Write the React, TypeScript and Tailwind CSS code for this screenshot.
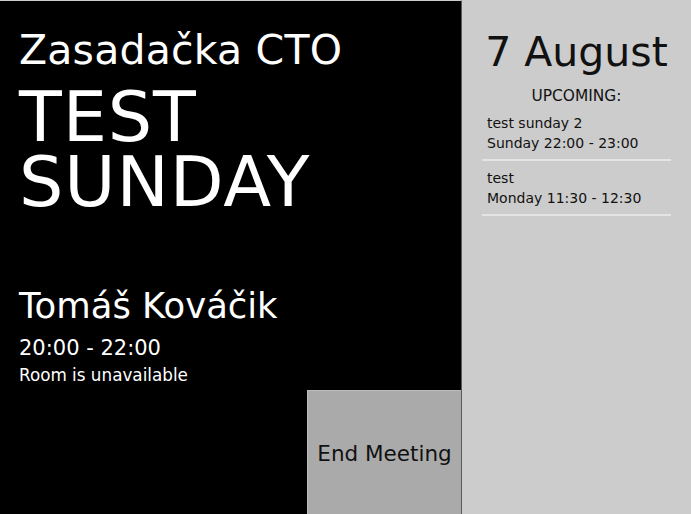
const upcoming = [
  { title: "test sunday 2", when: "Sunday 22:00 - 23:00" },
  { title: "test", when: "Monday 11:30 - 12:30" },
];

export default function App() {
  return (
    <div className="flex h-[514px] w-[691px] overflow-hidden bg-[#cccccc] font-['DejaVu_Sans',sans-serif]">
      {/* current meeting */}
      <div className="flex w-[462px] flex-col border-t border-r border-t-[#cccccc] border-r-[#5a5a5a] bg-black text-white">
        <div className="pl-[19px] pt-[29px]">
          <div className="text-[41px] leading-[40px] tracking-[0.2px]">Zasadačka CTO</div>
          <div className="mt-[15px] text-[70px] leading-[65px] tracking-[0.9px]">TEST SUNDAY</div>
          <div className="mt-[71px] text-[35.4px] leading-[40px]">Tomáš Kováčik</div>
          <div className="mt-[10px] text-[21px] leading-[25px]">20:00 - 22:00</div>
          <div className="mt-[3px] text-[16.8px] leading-[22px]">Room is unavailable</div>
        </div>
        <button className="mt-auto flex h-[124px] w-[154px] items-center justify-center self-end border-t border-l border-[#bdbdbd] bg-[#aaaaaa] pt-[3px] text-[21.5px] text-[#111]">
          End Meeting
        </button>
      </div>

      {/* side panel */}
      <div className="flex flex-1 flex-col px-5 pt-[28px] text-[#111]">
        <div className="text-center text-[41px] leading-[48px]">7 August</div>
        <div className="mt-[10px] text-center text-[15.4px] leading-[20px]">UPCOMING:</div>
        <div>
          {upcoming.map((m) => (
            <div key={m.title} className="border-b-2 border-[#e4e4e4] px-[5px] pt-[7px] pb-[6px] text-[14px] leading-[20px]">
              <div>{m.title}</div>
              <div>{m.when}</div>
            </div>
          ))}
        </div>
      </div>
    </div>
  );
}
